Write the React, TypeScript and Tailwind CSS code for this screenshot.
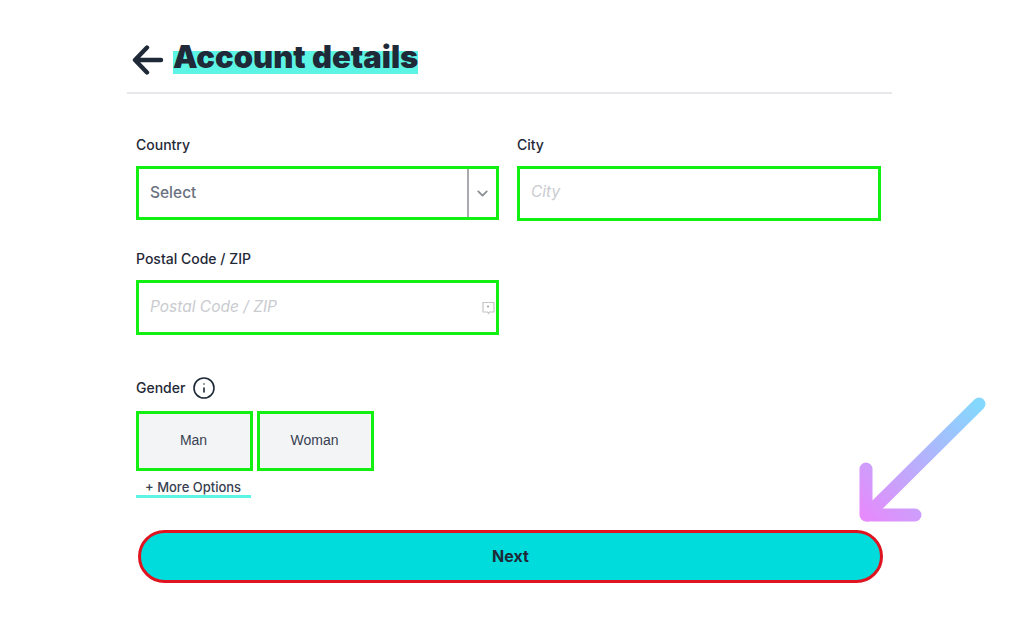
import { ChevronDown, Info } from 'lucide-react';

const fieldBox = 'border-[3px] border-[#12f012] flex items-center';

function BackArrow() {
  return (
    <svg width="32" height="32" viewBox="0 0 32 32" fill="none" stroke="#1f2937" strokeWidth="4.4" strokeLinecap="round" strokeLinejoin="round">
      <path d="M29 16H4M15 3.5 3 16l12 12.5" />
    </svg>
  );
}

function PointerArrow() {
  return (
    <svg className="absolute left-[856px] top-[394px]" width="132" height="132" viewBox="0 0 132 132" fill="none" strokeLinecap="round" strokeLinejoin="round">
      <defs>
        <linearGradient id="arrowFill" gradientUnits="userSpaceOnUse" x1="10" y1="122" x2="122" y2="10">
          <stop offset="0" stopColor="#e58bfb" />
          <stop offset="1" stopColor="#84d8fd" />
        </linearGradient>
      </defs>
      <path d="M123 10 11 121" stroke="url(#arrowFill)" strokeWidth="13" />
      <path d="M10 75v46h49" stroke="url(#arrowFill)" strokeWidth="13" />
    </svg>
  );
}

export default function App() {
  return (
    <div className="relative h-[639px] w-full overflow-hidden bg-white font-['Inter',sans-serif] text-[#1f2937]">
      <div className="ml-[127px] w-[765px]">
        <div className="flex h-[94px] items-start gap-[9px] border-b-2 border-[#e5e7eb] pl-[5px] pt-[44px]">
          <BackArrow />
          <h1 className="relative -mt-[5px] text-[31px] leading-[36px] font-black tracking-[0px] whitespace-nowrap">
            <span className="bg-[linear-gradient(transparent_36%,#5cf5e5_36%,#5cf5e5_96%,transparent_96%)]">Account details</span>
          </h1>
        </div>

        <div className="px-[9px] pt-[42px]">
          <div className="flex gap-[18px]">
            <div className="w-[363px]">
              <div className="h-[30px] text-[14px] leading-[18px] font-medium">Country</div>
              <div className={`${fieldBox} h-[54px] w-full bg-white`}>
                <span className="flex-1 pl-[11px] text-[15.5px] font-medium text-[#6b7280]">Select</span>
                <div className="flex h-full w-[29px] items-center justify-center border-l-2 border-[#a8aaad] text-[#8b9097]">
                  <ChevronDown size={17} strokeWidth={2.6} />
                </div>
              </div>
            </div>
            <div className="w-[364px]">
              <div className="h-[30px] text-[14px] leading-[18px] font-medium">City</div>
              <div className={`${fieldBox} h-[55px] w-full bg-white pb-[3px] pl-[11px] text-[15.5px] text-[#c9cbcf] italic`}>City</div>
            </div>
          </div>

          <div className="mt-[29px] w-[363px]">
            <div className="h-[30px] text-[14px] leading-[18px] font-medium">Postal Code / ZIP</div>
            <div className={`${fieldBox} h-[55px] w-full justify-between bg-white pr-[1px] pl-[11px] text-[15.5px] text-[#c9cbcf] italic`}>
              <span className="-mt-[2px]">Postal Code / ZIP</span>
              <svg width="13" height="14" viewBox="0 0 13 14" fill="none" stroke="#c4c6c9" strokeWidth="1.2">
                <path d="M1 1.5h11v9.5H7.5l-1 1.5-1-1.5H1z" />
                <path d="M5 5.5h2" stroke="#9a9da1" strokeWidth="1.6" />
              </svg>
            </div>
          </div>

          <div className="mt-[43px] flex h-[33px] items-start gap-[7px]">
            <span className="text-[14px] leading-[19px] font-medium">Gender</span>
            <Info size={24} strokeWidth={1.6} className="-mt-[2px]" />
          </div>

          <div className="flex gap-[4px]">
            <div className={`${fieldBox} h-[60px] w-[117px] justify-center bg-[#f3f4f6] pr-[2px] pb-[2px] font-['Liberation_Sans',sans-serif] text-[14px] text-[#374151]`}>Man</div>
            <div className={`${fieldBox} h-[60px] w-[117px] justify-center bg-[#f3f4f6] pr-[2px] pb-[2px] font-['Liberation_Sans',sans-serif] text-[14px] text-[#374151]`}>Woman</div>
          </div>

          <div className="mt-[9px] w-[115px] border-b-[3px] border-[#5cf5e5] pl-[9px] text-[13px] leading-[15px] font-medium whitespace-nowrap text-[#374151]">
            + More Options
          </div>

          <button className="mt-[32px] ml-[2px] flex h-[53px] w-[745px] items-center justify-center rounded-full border-[3px] border-[#e01420] bg-[#00dcdc] pb-[2px] text-[16px] font-bold text-[#1f2937]">
            Next
          </button>
        </div>
      </div>
      <PointerArrow />
    </div>
  );
}
